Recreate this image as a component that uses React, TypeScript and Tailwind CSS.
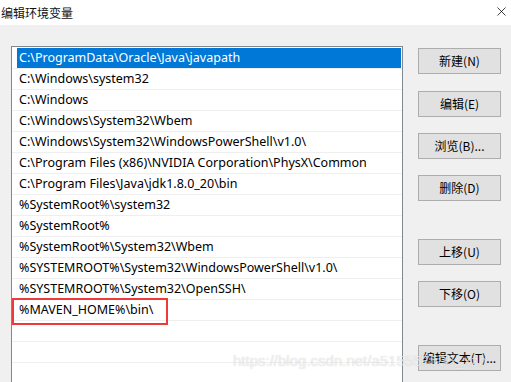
import { X } from 'lucide-react';

const paths = [
    'C:\\ProgramData\\Oracle\\Java\\javapath',
    'C:\\Windows\\system32',
    'C:\\Windows',
    'C:\\Windows\\System32\\Wbem',
    'C:\\Windows\\System32\\WindowsPowerShell\\v1.0\\',
    'C:\\Program Files (x86)\\NVIDIA Corporation\\PhysX\\Common',
    'C:\\Program Files\\Java\\jdk1.8.0_20\\bin',
    '%SystemRoot%\\system32',
    '%SystemRoot%',
    '%SystemRoot%\\System32\\Wbem',
    '%SYSTEMROOT%\\System32\\WindowsPowerShell\\v1.0\\',
    '%SYSTEMROOT%\\System32\\OpenSSH\\',
    '%MAVEN_HOME%\\bin\\',
    '',
    '',
    '',
    '',
];

const buttons = [
    { label: '新建(N)', gap: 'mt-[2px]' },
    { label: '编辑(E)', gap: 'mt-[17px]' },
    { label: '浏览(B)...', gap: 'mt-[16px]' },
    { label: '删除(D)', gap: 'mt-[16px]' },
    { label: '上移(U)', gap: 'mt-[38px]' },
    { label: '下移(O)', gap: 'mt-[16px]' },
    { label: '编辑文本(T)...', gap: 'mt-[38px]' },
];

export default function App() {
    return (
        <div className="relative w-[511px] h-[382px] overflow-hidden bg-[#f0f0f0] font-['Noto_Sans','Noto_Sans_CJK_SC',sans-serif] text-black">
            {/* Title bar */}
            <div className="h-[25px] bg-white flex items-center justify-between pl-[1px] pr-[2px]">
                <span className="text-[12px] leading-none font-['Noto_Sans_CJK_SC',sans-serif] text-[#111]">编辑环境变量</span>
                <X className="w-[15px] h-[15px] -mt-[2px]" strokeWidth={1.2} />
            </div>

            <div className="flex pl-[11px] pt-[21px]">
                {/* Path list */}
                <div className="w-[392px] h-[345px] shrink-0 border border-[#828790] bg-white pt-[1px]">
                    {paths.map((p, i) => (
                        <div key={i} className="relative h-[21px] border-b border-[#efefef]">
                            <div
                                className={`ml-[5px] mr-[1px] h-[20px] pl-[2px] flex items-center text-[12.5px] whitespace-nowrap ${
                                    i === 0 ? 'bg-[#0078d7] text-white' : ''
                                }`}
                            >
                                {p}
                            </div>
                            {i === 12 && (
                                <div className="absolute left-0 -top-[2px] w-[156px] h-[27px] border-2 border-[#f03a3a]" />
                            )}
                        </div>
                    ))}
                </div>

                {/* Buttons */}
                <div className="ml-[15px] flex flex-col">
                    {buttons.map((b) => (
                        <button
                            key={b.label}
                            className={`${b.gap} w-[83px] h-[26px] bg-[#e1e1e1] border border-[#adadad] text-[12px] leading-none font-['Noto_Sans_CJK_SC',sans-serif] flex items-center justify-center`}
                        >
                            {b.label}
                        </button>
                    ))}
                </div>
            </div>

            {/* Watermark */}
            <div className="absolute left-[233px] top-[350px] text-[15px] font-['Liberation_Sans',sans-serif] text-white/70 [text-shadow:0_0_1px_rgba(0,0,0,0.22)] whitespace-nowrap pointer-events-none">
                https://blog.csdn.net/a515557595_xzb
            </div>
        </div>
    );
}
